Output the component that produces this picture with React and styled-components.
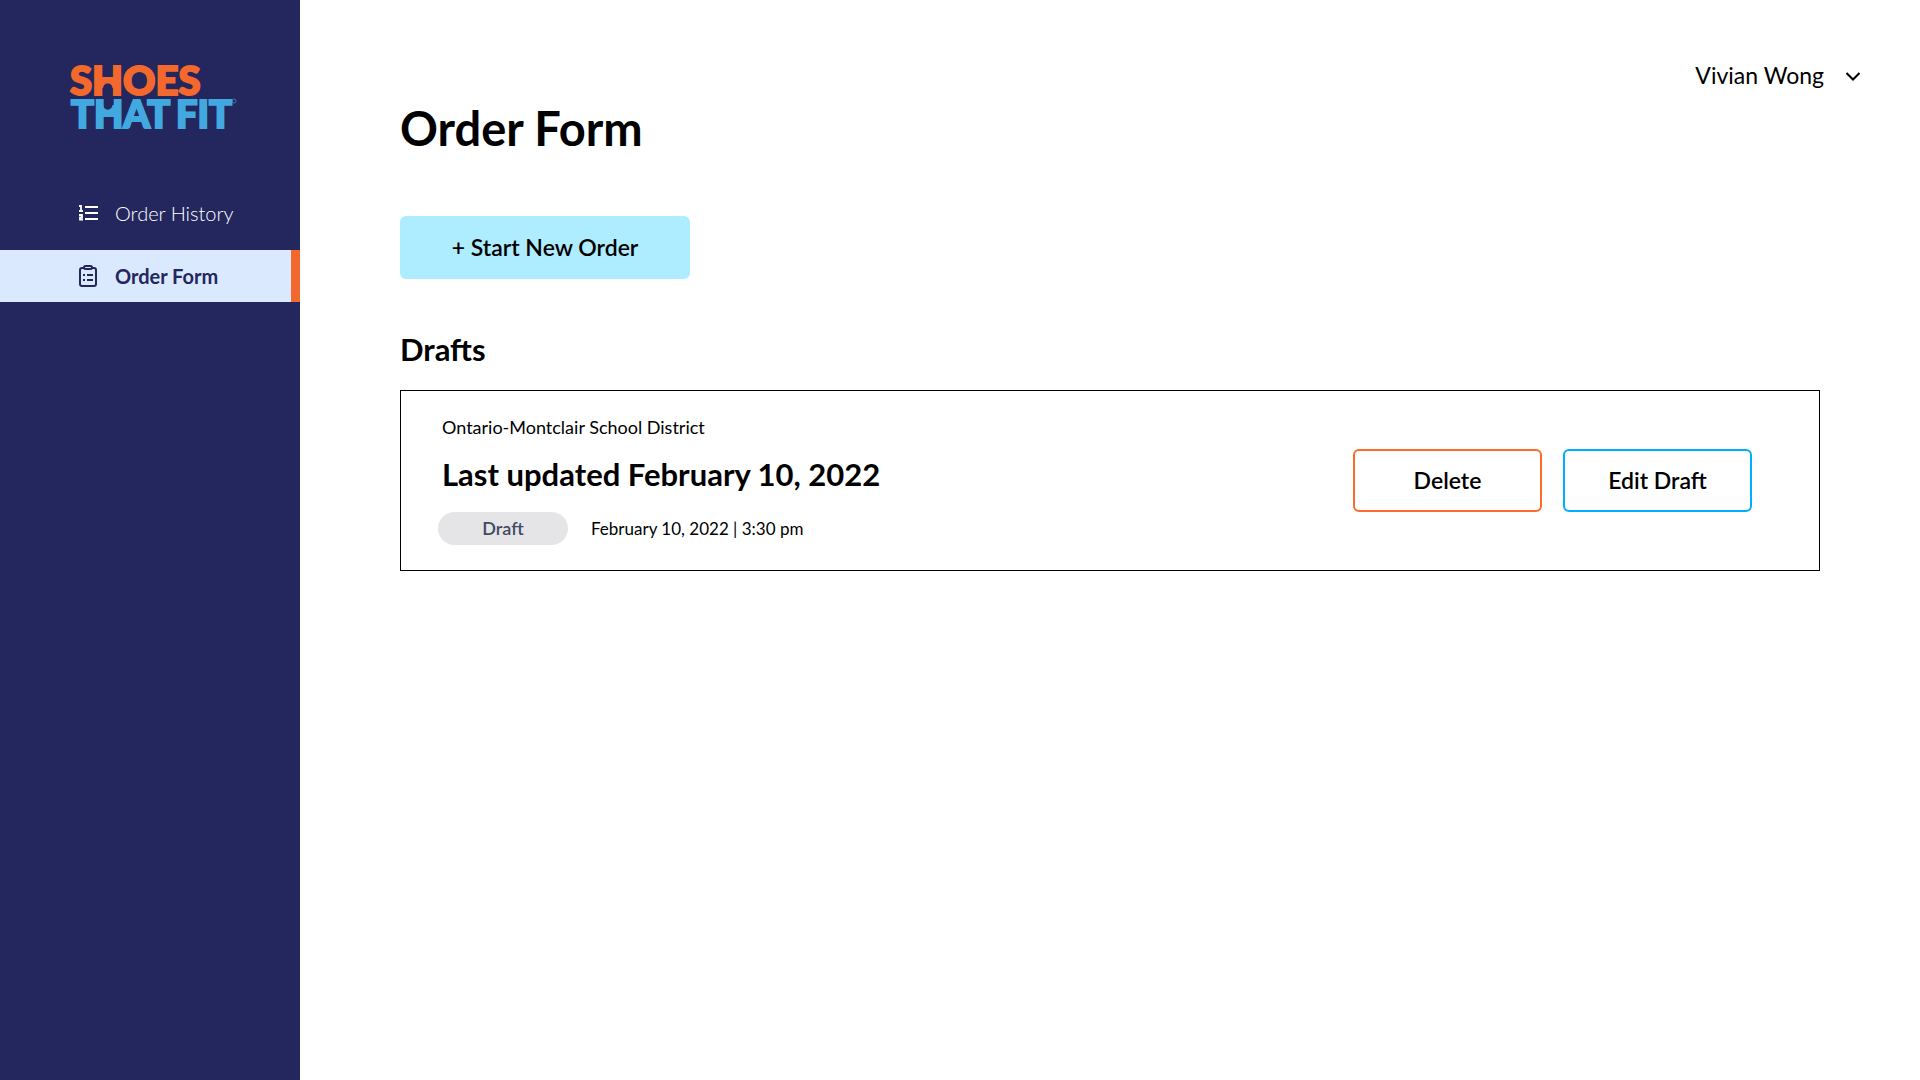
import React from "react";
import styled, { createGlobalStyle } from "styled-components";

const GlobalStyle = createGlobalStyle`
  * { box-sizing: border-box; }
  body {
    margin: 0;
    background: #ffffff;
    color: #000000;
    font-family: Lato, "Open Sans", sans-serif;
  }
  h1, h2, h3, p, ul { margin: 0; padding: 0; }
  button { font-family: inherit; color: inherit; cursor: pointer; }
`;

const Page = styled.div`
  display: flex;
  min-height: 100vh;
`;

const Sidebar = styled.aside`
  flex: 0 0 300px;
  background: #24275d;
  color: #ffffff;
  padding-top: 50px;
`;

const LogoLink = styled.a`
  display: block;
  margin-left: 60px;
  height: 86px;
`;

const NavList = styled.ul`
  display: flex;
  flex-direction: column;
  gap: 11px;
  margin-top: 51px;
  list-style: none;
`;

const NavLink = styled.a`
  display: flex;
  align-items: center;
  gap: 16px;
  height: 52px;
  padding-left: 78px;
  text-decoration: none;
  font-size: 20px;
  line-height: 24px;
  font-weight: ${(p) => (p.$active ? 700 : 300)};
  color: ${(p) => (p.$active ? "#24275d" : "#ffffff")};
  background: ${(p) => (p.$active ? "#dbe9ff" : "transparent")};
  border-right: 9px solid ${(p) => (p.$active ? "#f3692d" : "transparent")};
`;

const Main = styled.main`
  flex: 1;
  display: flex;
  flex-direction: column;
  align-items: stretch;
  padding: 60px 100px 60px 100px;
`;

const UserBar = styled.header`
  display: flex;
  justify-content: flex-end;
  margin-right: -42px;
`;

const UserButton = styled.button`
  display: flex;
  align-items: center;
  gap: 20px;
  padding: 0;
  border: 0;
  background: none;
  font-size: 23px;
  line-height: 30px;
`;

const PageTitle = styled.h1`
  margin-top: 10px;
  font-size: 47px;
  line-height: 56px;
  font-weight: 700;
`;

const Button = styled.button`
  height: 63px;
  width: ${(p) => (p.$wide ? "290px" : "189px")};
  padding: 0 0 2px;
  border: 2px solid ${(p) => p.$border};
  border-radius: 6px;
  background: ${(p) => p.$fill || "#ffffff"};
  font-size: 23px;
  line-height: 32px;
  font-weight: 600;
`;

const Toolbar = styled.div`
  display: flex;
  margin-top: 60px;
`;

const SectionTitle = styled.h2`
  margin-top: 50px;
  font-size: 31px;
  line-height: 40px;
  font-weight: 700;
`;

const DraftCard = styled.article`
  display: flex;
  align-items: center;
  justify-content: space-between;
  margin-top: 21px;
  min-height: 181px;
  padding: 20px 67px 20px 37px;
  border: 1px solid #000000;
`;

const DraftInfo = styled.div`
  display: flex;
  flex-direction: column;
  padding-bottom: 1px;
`;

const District = styled.p`
  padding-left: 4px;
  font-size: 18px;
  line-height: 24px;
`;

const DraftTitle = styled.h3`
  margin-top: 15px;
  padding-left: 4px;
  font-size: 31px;
  line-height: 40px;
  font-weight: 700;
`;

const Meta = styled.div`
  display: flex;
  align-items: center;
  gap: 23px;
  margin-top: 18px;
  font-size: 17px;
  line-height: 24px;
`;

const Badge = styled.span`
  width: 130px;
  height: 33px;
  border-radius: 17px;
  background: #e5e5e8;
  color: #434a60;
  font-size: 18px;
  line-height: 32px;
  font-weight: 600;
  text-align: center;
`;

const Actions = styled.div`
  display: flex;
  gap: 21px;
`;

const LogoText = styled.text`
  font-family: Lato, sans-serif;
  font-weight: 900;
  font-size: ${(p) => p.$size}px;
  stroke-width: 2px;
`;

function Logo() {
  return (
    <svg width="180" height="86" viewBox="0 0 180 86" role="img" aria-label="Shoes That Fit">
      <LogoText x="10" y="45" $size={40} fill="#f3692d" stroke="#f3692d">SHOES</LogoText>
      <LogoText x="11" y="78" $size={38} fill="#41a9e0" stroke="#41a9e0">THAT</LogoText>
      <LogoText x="116" y="78" $size={38} fill="#41a9e0" stroke="#41a9e0">FIT</LogoText>
      <path d="M42 31H54V38H52.500A4.700 4.700 0 0 0 43.100 38H42Z" fill="#f3692d" />
      <path d="M42 55H43.100A4.700 4.700 0 0 0 52.500 55H54V64H42Z" fill="#41a9e0" />
      <circle cx="174" cy="51" r="2" fill="none" stroke="#41a9e0" strokeWidth="0.6" />
    </svg>
  );
}

function ListIcon() {
  return (
    <svg width="21" height="18" viewBox="0 0 21 18" aria-hidden="true" fill="none" stroke="#ffffff" strokeWidth="2">
      <path d="M7 3H20M7 9H20M7 15H20" />
      <path d="M1 2H3V7M1 7H5M1 11H4V13.300H2V15.500H5" strokeWidth="1.800" />
    </svg>
  );
}

function ClipboardIcon() {
  return (
    <svg width="21" height="24" viewBox="0 0 21 24" aria-hidden="true" fill="none" stroke="#24275d" strokeWidth="2" strokeLinejoin="round">
      <path d="M6 4H4Q2 4 2 6V20Q2 22 4 22H16Q18 22 18 20V6Q18 4 16 4H14" />
      <rect x="6" y="2" width="8" height="3" rx="1.500" />
      <path d="M5 11H7M9 11H15M5 16H7M9 16H15" />
    </svg>
  );
}

function Chevron() {
  return (
    <svg width="18" height="18" viewBox="0 0 18 18" aria-hidden="true">
      <path d="M2.500 7L9 13.500L15.500 7" fill="none" stroke="#000000" strokeWidth="2" />
    </svg>
  );
}

export default function App() {
  return (
    <>
      <GlobalStyle />
      <Page>
        <Sidebar>
          <LogoLink href="#home"><Logo /></LogoLink>
          <nav aria-label="Main">
            <NavList>
              <li><NavLink href="#history"><ListIcon />Order History</NavLink></li>
              <li><NavLink href="#form" $active aria-current="page"><ClipboardIcon />Order Form</NavLink></li>
            </NavList>
          </nav>
        </Sidebar>
        <Main>
          <UserBar>
            <UserButton type="button">Vivian Wong<Chevron /></UserButton>
          </UserBar>
          <PageTitle>Order Form</PageTitle>
          <Toolbar>
            <Button type="button" $wide $border="#aeecff" $fill="#aeecff">+ Start New Order</Button>
          </Toolbar>
          <SectionTitle>Drafts</SectionTitle>
          <DraftCard>
            <DraftInfo>
              <District>Ontario-Montclair School District</District>
              <DraftTitle>Last updated February 10, 2022</DraftTitle>
              <Meta>
                <Badge>Draft</Badge>
                <span>February 10, 2022 | 3:30 pm</span>
              </Meta>
            </DraftInfo>
            <Actions>
              <Button type="button" $border="#ff6a2b">Delete</Button>
              <Button type="button" $border="#00aeff">Edit Draft</Button>
            </Actions>
          </DraftCard>
        </Main>
      </Page>
    </>
  );
}
